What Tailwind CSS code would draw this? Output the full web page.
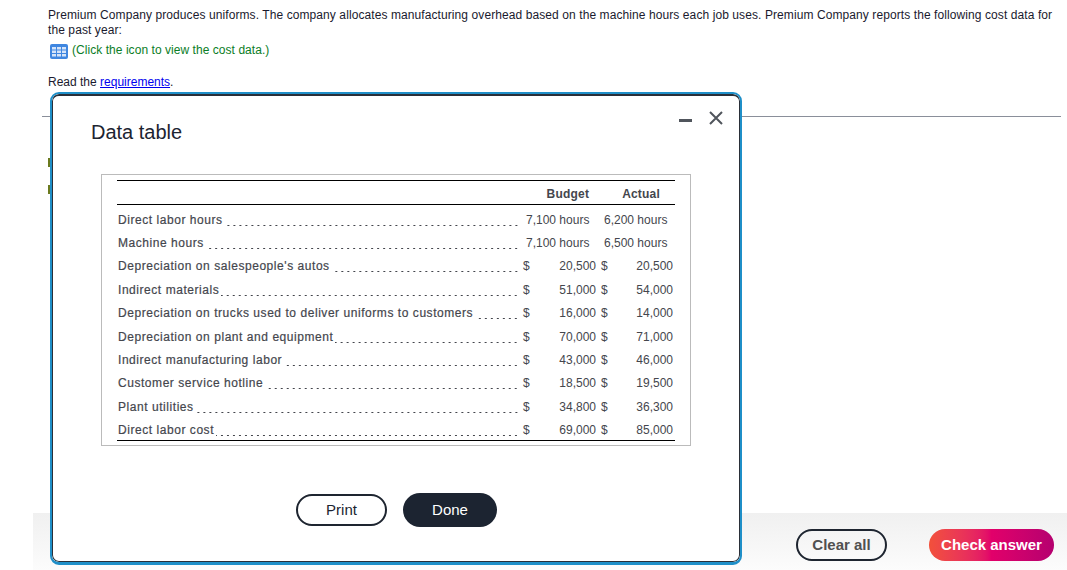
<!DOCTYPE html>
<html lang="en">
<head>
    <meta charset="UTF-8">
    <title>Data table</title>
    <script src="https://cdn.jsdelivr.net/npm/@tailwindcss/browser@4"></script>
</head>
<body class="bg-white font-['Liberation_Sans',Arial,sans-serif]">
    <div class="relative w-[1067px] h-[570px] overflow-hidden">
        <!-- question text -->
        <div class="pl-[48px] pr-[12px] pt-[8px] text-[12px] leading-[15px] text-[#1a1a2e]">
            <p class="tracking-[0.088px]">Premium Company produces uniforms. The company allocates manufacturing overhead based on the machine hours each job uses. Premium Company reports the following cost data for the past year:</p>
            <div class="flex items-center gap-[4px] mt-[5px] pl-[2px] h-[16px]">
                <svg width="18" height="15" viewBox="0 0 18 15"><rect width="18" height="15" rx="2" fill="#3f86e0"/><path d="M2 3h4v2.500H2zM7 3h4v2.500H7zM12 3h4v2.500h-4zM2 6.500h4V9H2zM7 6.500h4V9H7zM12 6.500h4V9h-4zM2 10h4v2.500H2zM7 10h4v2.500H7zM12 10h4v2.500h-4z" fill="#d5e4f9"/></svg>
                <span class="text-[#0b7d26] tracking-[0.05px] -mt-[2px]">(Click the icon to view the cost data.)</span>
            </div>
            <p class="mt-[16px]">Read the <a href="#" class="text-[#0000ee] underline">requirements</a>.</p>
        </div>
        <div class="mt-[26px] ml-[42px] mr-[6px] h-px bg-[#8a8f9a]"></div>
        <div class="absolute left-[48px] top-[158px] w-[2px] h-[9px] bg-[#6b7a1e]"></div>
        <div class="absolute left-[48px] top-[185px] w-[2px] h-[9px] bg-[#6b7a1e]"></div>

        <!-- bottom bar -->
        <div class="absolute left-[33px] right-0 top-[513px] h-[57px] bg-gradient-to-b from-[#f0f0f0] to-[#fcfcfc] flex items-start justify-end gap-[42px] pt-[16px] pr-[13px]">
            <button class="w-[91px] h-[32px] rounded-full border-2 border-[#1e2530] text-[15px] font-bold text-[#505050]">Clear all</button>
            <button class="w-[125px] h-[32px] rounded-full bg-gradient-to-r from-[#f2503a] via-[#e2006a] to-[#b5006f] text-[15px] font-bold text-white">Check answer</button>
        </div>

        <!-- modal -->
        <div class="absolute left-[50px] top-[92px] w-[692px] h-[473px] bg-white rounded-[9px] border-2 border-b-[3px] border-[#1f8fc8] overflow-hidden">
            <div class="relative h-full border border-t-2 border-[#2a2f38] rounded-[7px] pt-[23px] pl-[38px]">
                <h2 class="text-[20px] leading-[26px] text-[#1c2431]">Data table</h2>
                <div class="absolute right-[16px] top-[15px] flex items-center gap-[17px]">
                    <div class="w-[13px] h-[3px] bg-[#50555c] mt-[4px]"></div>
                    <svg width="14" height="14" viewBox="0 0 14 14"><path d="M1 1l12 12M13 1L1 13" stroke="#50555c" stroke-width="2" fill="none"/></svg>
                </div>

                <!-- table -->
                <div class="absolute left-[48px] top-[78px] w-[590px] h-[272px] border border-[#bbbbbb] px-[15px] pt-[5px] text-[12px] text-[#44464d]">
                    <div class="border-y border-black h-[25px] flex items-center font-bold tracking-[0.2px] pr-[15px] pt-[2px] justify-end gap-[33px]">
                        <span>Budget</span><span>Actual</span>
                    </div>
                    <div class="border-b border-black h-[236px] pt-[3px]">
                        <div class="flex h-[23.4px] items-center"><div class="w-[402px] pl-[1px] flex items-center"><span class="tracking-[0.55px] [-webkit-text-stroke:0.2px]">Direct labor hours</span><span class="flex-1 ml-[2px] h-[3px] self-end mb-[2px] bg-[radial-gradient(circle,#44464d_0.7px,transparent_1px)] bg-[length:6px_3px] bg-right bg-repeat-x"></span></div><div class="w-[64px] ml-[7px]">7,100 hours</div><div class="ml-[14px]">6,200 hours</div></div>
                        <div class="flex h-[23.4px] items-center"><div class="w-[402px] pl-[1px] flex items-center"><span class="tracking-[0.55px] [-webkit-text-stroke:0.2px]">Machine hours</span><span class="flex-1 ml-[2px] h-[3px] self-end mb-[2px] bg-[radial-gradient(circle,#44464d_0.7px,transparent_1px)] bg-[length:6px_3px] bg-right bg-repeat-x"></span></div><div class="w-[64px] ml-[7px]">7,100 hours</div><div class="ml-[14px]">6,500 hours</div></div>
                        <div class="flex h-[23.4px] items-center"><div class="w-[402px] pl-[1px] flex items-center"><span class="tracking-[0.55px] [-webkit-text-stroke:0.2px]">Depreciation on salespeople's autos</span><span class="flex-1 ml-[2px] h-[3px] self-end mb-[2px] bg-[radial-gradient(circle,#44464d_0.7px,transparent_1px)] bg-[length:6px_3px] bg-right bg-repeat-x"></span></div><div class="w-[73px] ml-[4px] flex justify-between"><span>$</span><span>20,500</span></div><div class="w-[72px] ml-[5px] flex justify-between"><span>$</span><span>20,500</span></div></div>
                        <div class="flex h-[23.4px] items-center"><div class="w-[402px] pl-[1px] flex items-center"><span class="tracking-[0.55px] [-webkit-text-stroke:0.2px]">Indirect materials</span><span class="flex-1 ml-[2px] h-[3px] self-end mb-[2px] bg-[radial-gradient(circle,#44464d_0.7px,transparent_1px)] bg-[length:6px_3px] bg-right bg-repeat-x"></span></div><div class="w-[73px] ml-[4px] flex justify-between"><span>$</span><span>51,000</span></div><div class="w-[72px] ml-[5px] flex justify-between"><span>$</span><span>54,000</span></div></div>
                        <div class="flex h-[23.4px] items-center"><div class="w-[402px] pl-[1px] flex items-center"><span class="tracking-[0.55px] [-webkit-text-stroke:0.2px]">Depreciation on trucks used to deliver uniforms to customers</span><span class="flex-1 ml-[2px] h-[3px] self-end mb-[2px] bg-[radial-gradient(circle,#44464d_0.7px,transparent_1px)] bg-[length:6px_3px] bg-right bg-repeat-x"></span></div><div class="w-[73px] ml-[4px] flex justify-between"><span>$</span><span>16,000</span></div><div class="w-[72px] ml-[5px] flex justify-between"><span>$</span><span>14,000</span></div></div>
                        <div class="flex h-[23.4px] items-center"><div class="w-[402px] pl-[1px] flex items-center"><span class="tracking-[0.55px] [-webkit-text-stroke:0.2px]">Depreciation on plant and equipment</span><span class="flex-1 ml-[2px] h-[3px] self-end mb-[2px] bg-[radial-gradient(circle,#44464d_0.7px,transparent_1px)] bg-[length:6px_3px] bg-right bg-repeat-x"></span></div><div class="w-[73px] ml-[4px] flex justify-between"><span>$</span><span>70,000</span></div><div class="w-[72px] ml-[5px] flex justify-between"><span>$</span><span>71,000</span></div></div>
                        <div class="flex h-[23.4px] items-center"><div class="w-[402px] pl-[1px] flex items-center"><span class="tracking-[0.55px] [-webkit-text-stroke:0.2px]">Indirect manufacturing labor</span><span class="flex-1 ml-[2px] h-[3px] self-end mb-[2px] bg-[radial-gradient(circle,#44464d_0.7px,transparent_1px)] bg-[length:6px_3px] bg-right bg-repeat-x"></span></div><div class="w-[73px] ml-[4px] flex justify-between"><span>$</span><span>43,000</span></div><div class="w-[72px] ml-[5px] flex justify-between"><span>$</span><span>46,000</span></div></div>
                        <div class="flex h-[23.4px] items-center"><div class="w-[402px] pl-[1px] flex items-center"><span class="tracking-[0.55px] [-webkit-text-stroke:0.2px]">Customer service hotline</span><span class="flex-1 ml-[2px] h-[3px] self-end mb-[2px] bg-[radial-gradient(circle,#44464d_0.7px,transparent_1px)] bg-[length:6px_3px] bg-right bg-repeat-x"></span></div><div class="w-[73px] ml-[4px] flex justify-between"><span>$</span><span>18,500</span></div><div class="w-[72px] ml-[5px] flex justify-between"><span>$</span><span>19,500</span></div></div>
                        <div class="flex h-[23.4px] items-center"><div class="w-[402px] pl-[1px] flex items-center"><span class="tracking-[0.55px] [-webkit-text-stroke:0.2px]">Plant utilities</span><span class="flex-1 ml-[2px] h-[3px] self-end mb-[2px] bg-[radial-gradient(circle,#44464d_0.7px,transparent_1px)] bg-[length:6px_3px] bg-right bg-repeat-x"></span></div><div class="w-[73px] ml-[4px] flex justify-between"><span>$</span><span>34,800</span></div><div class="w-[72px] ml-[5px] flex justify-between"><span>$</span><span>36,300</span></div></div>
                        <div class="flex h-[23.4px] items-center"><div class="w-[402px] pl-[1px] flex items-center"><span class="tracking-[0.55px] [-webkit-text-stroke:0.2px]">Direct labor cost</span><span class="flex-1 ml-[2px] h-[3px] self-end mb-[2px] bg-[radial-gradient(circle,#44464d_0.7px,transparent_1px)] bg-[length:6px_3px] bg-right bg-repeat-x"></span></div><div class="w-[73px] ml-[4px] flex justify-between"><span>$</span><span>69,000</span></div><div class="w-[72px] ml-[5px] flex justify-between"><span>$</span><span>85,000</span></div></div>
                    </div>
                </div>

                <!-- buttons -->
                <div class="absolute left-[243px] top-[397px] flex items-center gap-[16px]">
                    <button class="w-[91px] h-[32px] rounded-full border-2 border-[#1e2530] text-[15px] text-[#1c2431]">Print</button>
                    <button class="w-[94px] h-[34px] rounded-full bg-[#1c2431] text-[15px] text-white">Done</button>
                </div>
            </div>
        </div>
    </div>
</body>
</html>
